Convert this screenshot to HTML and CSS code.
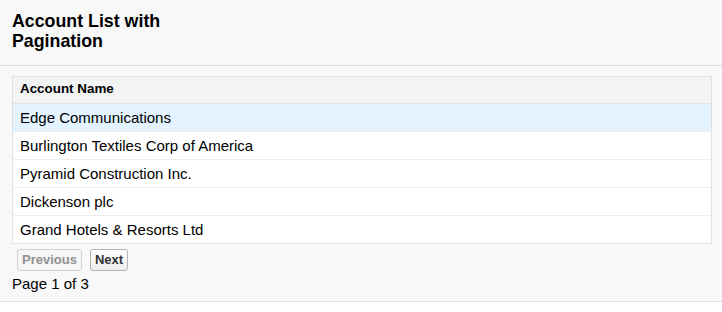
FILE: index.html
```html
<!DOCTYPE html>
<html lang="en">
<head>
<meta charset="utf-8">
<title>Account List with Pagination</title>
<link rel="stylesheet" href="styles.css">
</head>
<body>
<div class="page">
  <div class="page-header">
    <h1 class="page-title">Account List with Pagination</h1>
  </div>
  <div class="page-body">
    <table class="list">
      <thead>
        <tr><th>Account Name</th></tr>
      </thead>
      <tbody>
        <tr class="is-hover"><td>Edge Communications</td></tr>
        <tr><td>Burlington Textiles Corp of America</td></tr>
        <tr><td>Pyramid Construction Inc.</td></tr>
        <tr><td>Dickenson plc</td></tr>
        <tr><td>Grand Hotels &amp; Resorts Ltd</td></tr>
      </tbody>
    </table>
    <div class="pager">
      <button class="btn" disabled>Previous</button>
      <button class="btn">Next</button>
    </div>
    <div class="page-info">Page 1 of 3</div>
  </div>
</div>
</body>
</html>
```

FILE: styles.css
```css
html, body {
  margin: 0;
  padding: 0;
  background: #ffffff;
}

body {
  font-family: "Liberation Sans", Arial, sans-serif;
  color: #000000;
}

.page {
  background: #f8f8f8;
  border-bottom: 1px solid #e2e2e2;
}

.page-header {
  padding: 11px 12px 14px;
  border-bottom: 1px solid #dddddd;
}

.page-title {
  margin: 0;
  width: 170px;
  font-size: 17.8px;
  line-height: 20px;
  font-weight: bold;
  color: #000000;
}

.page-body {
  padding: 10px 10px 9px 12px;
}

.list {
  width: 100%;
  border-collapse: collapse;
  background: #ffffff;
  border: 1px solid #dfe1e2;
}

.list th {
  text-align: left;
  font-size: 13.4px;
  line-height: 16px;
  font-weight: bold;
  padding: 4px 7px 6px;
  background: #f2f3f3;
  border-bottom: 1px solid #dfe1e2;
}

.list td {
  font-size: 15px;
  line-height: 17px;
  padding: 5px 7px 5px;
  border-bottom: 1px solid #ececec;
  color: #000000;
}

.list tbody tr:last-child td {
  border-bottom: 0;
}

.list tr.is-hover td {
  background: #e3f3ff;
}

.pager {
  display: flex;
  gap: 8px;
  padding-left: 5px;
  margin-top: 5px;
}

.btn {
  font-family: "Liberation Sans", Arial, sans-serif;
  font-size: 13px;
  line-height: 15px;
  font-weight: bold;
  color: #333333;
  padding: 2px 4px 3px;
  border: 1px solid #b5b5b5;
  border-radius: 3px;
  background: linear-gradient(#ffffff, #ededed);
  margin: 0;
}

.btn:disabled {
  color: #909090;
  border-color: #d2d2d2;
  background: #f6f6f6;
}

.page-info {
  margin-top: 4px;
  font-size: 15px;
  line-height: 17px;
}
```
